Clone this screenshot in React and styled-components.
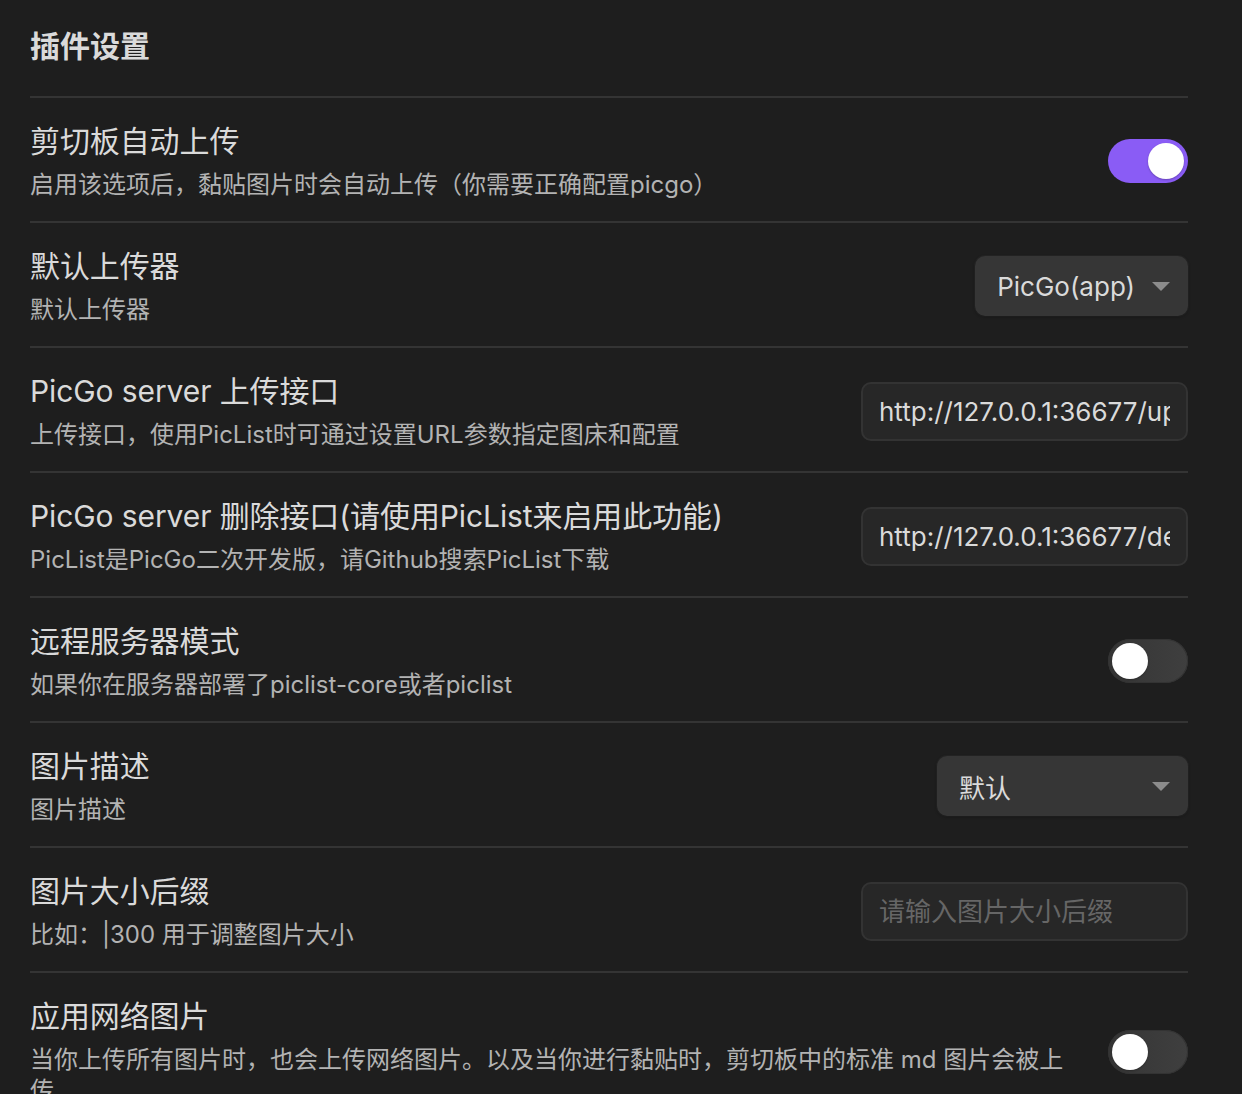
import React from "react";
import styled, { createGlobalStyle } from "styled-components";

const Global = createGlobalStyle`
  html, body {
    margin: 0;
    padding: 0;
    background: #1e1e1e;
  }
  body {
    font-family: Inter, "Noto Sans CJK SC", sans-serif;
    -webkit-font-smoothing: antialiased;
    color: #dadada;
  }
`;

const Page = styled.div`
  padding: 0 54px 0 30px;
`;

const Heading = styled.h2`
  margin: 0;
  padding: 27px 0 30px;
  font-size: 30px;
  line-height: 39px;
  font-weight: 700;
  color: #dadada;
`;

const Item = styled.div`
  display: flex;
  align-items: center;
  border-top: 2px solid #343434;
  padding: 24px 0 21px;
`;

const Info = styled.div`
  flex: 1 1 auto;
  min-width: 0;
  margin-right: 32px;
`;

const Name = styled.div`
  font-size: 30px;
  line-height: 39px;
  color: #dadada;
  letter-spacing: -0.1px;
`;

const Desc = styled.div`
  margin-top: 8px;
  font-size: 24px;
  line-height: 31px;
  color: #b3b3b3;
`;

const Control = styled.div`
  flex: 0 0 auto;
  display: flex;
  align-items: center;
  justify-content: flex-end;
`;

const Track = styled.div`
  box-sizing: border-box;
  width: 80px;
  height: 44px;
  padding: 4px;
  border-radius: 22px;
  display: flex;
  justify-content: ${(p) => (p.$on ? "flex-end" : "flex-start")};
  background: ${(p) =>
    p.$on ? "#8a5cf5" : "linear-gradient(90deg, #353535, #3f3f3f)"};
  box-shadow: ${(p) => (p.$on ? "none" : "inset 0 0 0 1px #333")};
`;

const Knob = styled.div`
  width: 36px;
  height: 36px;
  border-radius: 50%;
  background: #ffffff;
  box-shadow: 0 1px 2px rgba(0, 0, 0, 0.25);
`;

const Select = styled.div`
  box-sizing: border-box;
  height: 60px;
  min-width: ${(p) => p.$minWidth || 0}px;
  padding: 0 18px 0 22px;
  display: flex;
  align-items: center;
  justify-content: space-between;
  gap: 17px;
  border-radius: 10px;
  background: #363636;
  box-shadow: 0 1px 3px rgba(0, 0, 0, 0.35), 0 0 0 1px rgba(255, 255, 255, 0.03);
  font-size: 26px;
  color: #dadada;
`;

const SelectLabel = styled.span`
  white-space: nowrap;
`;

const TextInput = styled.input`
  box-sizing: border-box;
  width: 327px;
  height: 59px;
  padding: 0 16px;
  border: 2px solid #333333;
  border-radius: 10px;
  background: #272727;
  color: #dadada;
  font-family: inherit;
  font-size: 26px;
  outline: none;
  &::placeholder {
    color: #666666;
  }
`;

const Arrow = () => (
  <svg width="18" height="9" viewBox="0 0 18 9">
    <path d="M0 0 L18 0 L9 9 Z" fill="#8c8c8c" />
  </svg>
);

const Toggle = ({ on }) => (
  <Track $on={on}>
    <Knob />
  </Track>
);

const Dropdown = ({ label, minWidth }) => (
  <Select $minWidth={minWidth}>
    <SelectLabel>{label}</SelectLabel>
    <Arrow />
  </Select>
);

const Setting = ({ name, desc, children }) => (
  <Item>
    <Info>
      <Name>{name}</Name>
      <Desc>{desc}</Desc>
    </Info>
    <Control>{children}</Control>
  </Item>
);

export default function App() {
  return (
    <>
      <Global />
      <Page>
        <Heading>插件设置</Heading>
        <Setting
          name="剪切板自动上传"
          desc="启用该选项后，黏贴图片时会自动上传（你需要正确配置picgo）"
        >
          <Toggle on />
        </Setting>
        <Setting name="默认上传器" desc="默认上传器">
          <Dropdown label="PicGo(app)" />
        </Setting>
        <Setting
          name="PicGo server 上传接口"
          desc="上传接口，使用PicList时可通过设置URL参数指定图床和配置"
        >
          <TextInput readOnly value="http://127.0.0.1:36677/upload" />
        </Setting>
        <Setting
          name="PicGo server 删除接口(请使用PicList来启用此功能)"
          desc="PicList是PicGo二次开发版，请Github搜索PicList下载"
        >
          <TextInput readOnly value="http://127.0.0.1:36677/delete" />
        </Setting>
        <Setting
          name="远程服务器模式"
          desc="如果你在服务器部署了piclist-core或者piclist"
        >
          <Toggle />
        </Setting>
        <Setting name="图片描述" desc="图片描述">
          <Dropdown label="默认" minWidth={251} />
        </Setting>
        <Setting name="图片大小后缀" desc="比如：|300 用于调整图片大小">
          <TextInput placeholder="请输入图片大小后缀" />
        </Setting>
        <Setting
          name="应用网络图片"
          desc="当你上传所有图片时，也会上传网络图片。以及当你进行黏贴时，剪切板中的标准 md 图片会被上传"
        >
          <Toggle />
        </Setting>
      </Page>
    </>
  );
}
